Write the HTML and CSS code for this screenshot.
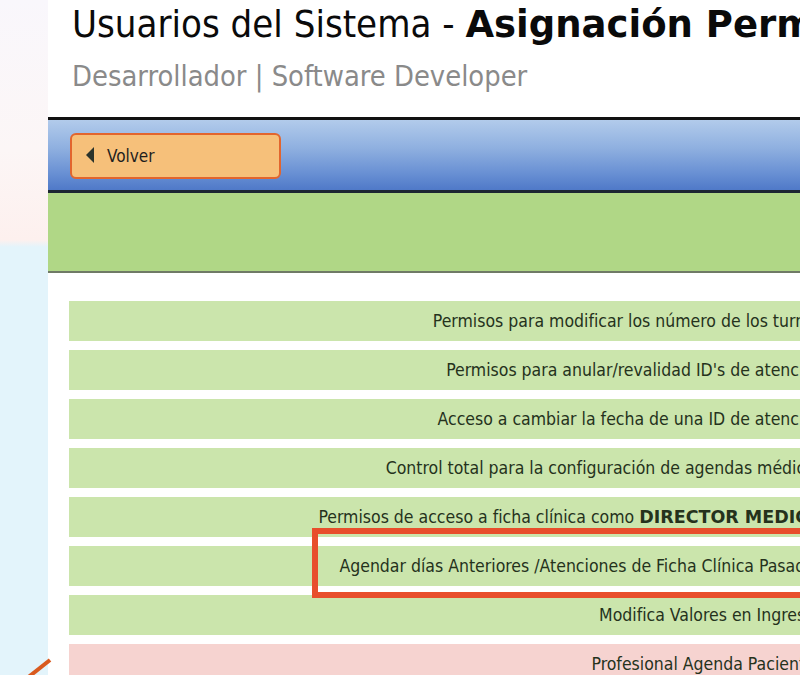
FILE: index.html
```html
<!DOCTYPE html>
<html lang="es">
<head>
<meta charset="utf-8">
<title>Usuarios del Sistema - Asignación Permisos</title>
<link rel="stylesheet" href="styles.css">
</head>
<body>
<div class="page">
  <div class="side"></div>
  <div class="main">
    <header class="head">
      <h1 class="title">Usuarios del Sistema - <b>Asignación Permisos</b></h1>
      <p class="subtitle">Desarrollador | Software Developer</p>
    </header>
    <div class="toolbar">
      <button class="back"><span class="tri"></span>Volver</button>
    </div>
    <div class="greenbar"></div>
    <div class="rows">
      <div class="row ok">Permisos para modificar los número de los turnos</div>
      <div class="row ok">Permisos para anular/revalidad ID's de atención</div>
      <div class="row ok">Acceso a cambiar la fecha de una ID de atención</div>
      <div class="row ok">Control total para la configuración de agendas médicas</div>
      <div class="row ok">Permisos de acceso a ficha clínica como <b>DIRECTOR MEDICO</b></div>
      <div class="row ok">Agendar días Anteriores /Atenciones de Ficha Clínica Pasadas</div>
      <div class="row ok">Modifica Valores en Ingresos</div>
      <div class="row no">Profesional Agenda Pacientes</div>
    </div>
  </div>
</div>
<div class="highlight"></div>
<svg class="arrow" width="60" height="30" viewBox="0 0 60 30"><line x1="26" y1="32" x2="50" y2="13" stroke="#d95a1f" stroke-width="4"/></svg>
</body>
</html>
```
FILE: styles.css
```css
html, body {
  margin: 0;
  padding: 0;
  width: 800px;
  height: 675px;
  overflow: hidden;
  background: #fff;
}
body {
  position: relative;
  font-family: "DejaVu Sans Condensed", "DejaVu Sans", sans-serif;
}
.page {
  display: flex;
  height: 675px;
}
.side {
  flex: 0 0 48px;
  background: linear-gradient(to bottom, #f9f7fc 0, #fcf6f6 150px, #fdf0ee 240px, #e3f4fb 247px, #e3f4fb 100%);
}
.main {
  flex: 0 0 800px;
  width: 800px;
  min-width: 0;
  background: #fff;
}
.head {
  padding: 2px 0 0 24px;
}
.title {
  margin: 0;
  font-size: 38px;
  font-weight: normal;
  color: #0a0a0a;
  white-space: nowrap;
  line-height: 44px;
}
.title b {
  font-family: "DejaVu Sans", sans-serif;
  font-weight: bold;
  font-size: 37px;
}
.subtitle {
  margin: 13px 0 0 0;
  font-size: 28.8px;
  line-height: 32px;
  color: #8a8a8a;
  white-space: nowrap;
}
.toolbar {
  margin-top: 25px;
  border-top: 3px solid #121212;
  border-bottom: 3px solid #1c2632;
  height: 70px;
  box-sizing: content-box;
  background: linear-gradient(to bottom, #b2cbeb 0%, #8fb0e0 40%, #6a91d4 75%, #4f79c8 100%);
  padding-left: 22px;
  display: flex;
  align-items: flex-start;
}
.back {
  margin-top: 13px;
  width: 211px;
  height: 46px;
  box-sizing: border-box;
  background: #f6c07a;
  border: 2px solid #e2652e;
  border-radius: 6px;
  display: flex;
  align-items: center;
  padding: 0 0 0 14px;
  font-family: "DejaVu Sans Condensed", "DejaVu Sans", sans-serif;
  font-size: 17px;
  color: #1e1e1e;
  text-align: left;
}
.tri {
  width: 0;
  height: 0;
  border-top: 8px solid transparent;
  border-bottom: 8px solid transparent;
  border-right: 8px solid #2b332b;
  margin-right: 13px;
  margin-top: -2px;
}
.greenbar {
  height: 78px;
  background: #b0d786;
  border-bottom: 2px solid #6f7a66;
}
.rows {
  margin: 28px 0 0 21px;
  display: flex;
  flex-direction: column;
  gap: 9px;
}
.row {
  height: 40px;
  display: flex;
  align-items: center;
  justify-content: flex-end;
  padding-right: 25px;
  font-size: 17.5px;
  color: #25321c;
  white-space: nowrap;
}
.row.ok {
  background: #cbe5ac;
}
.row.no {
  background: #f6d3d0;
}
.row b {
  margin-left: 5px;
  font-family: "DejaVu Sans", sans-serif;
}
.highlight {
  position: absolute;
  left: 312px;
  top: 528px;
  width: 520px;
  height: 70px;
  box-sizing: border-box;
  border: 6px solid #e84e2c;
}
.arrow {
  position: absolute;
  left: 0;
  top: 647px;
}
```
